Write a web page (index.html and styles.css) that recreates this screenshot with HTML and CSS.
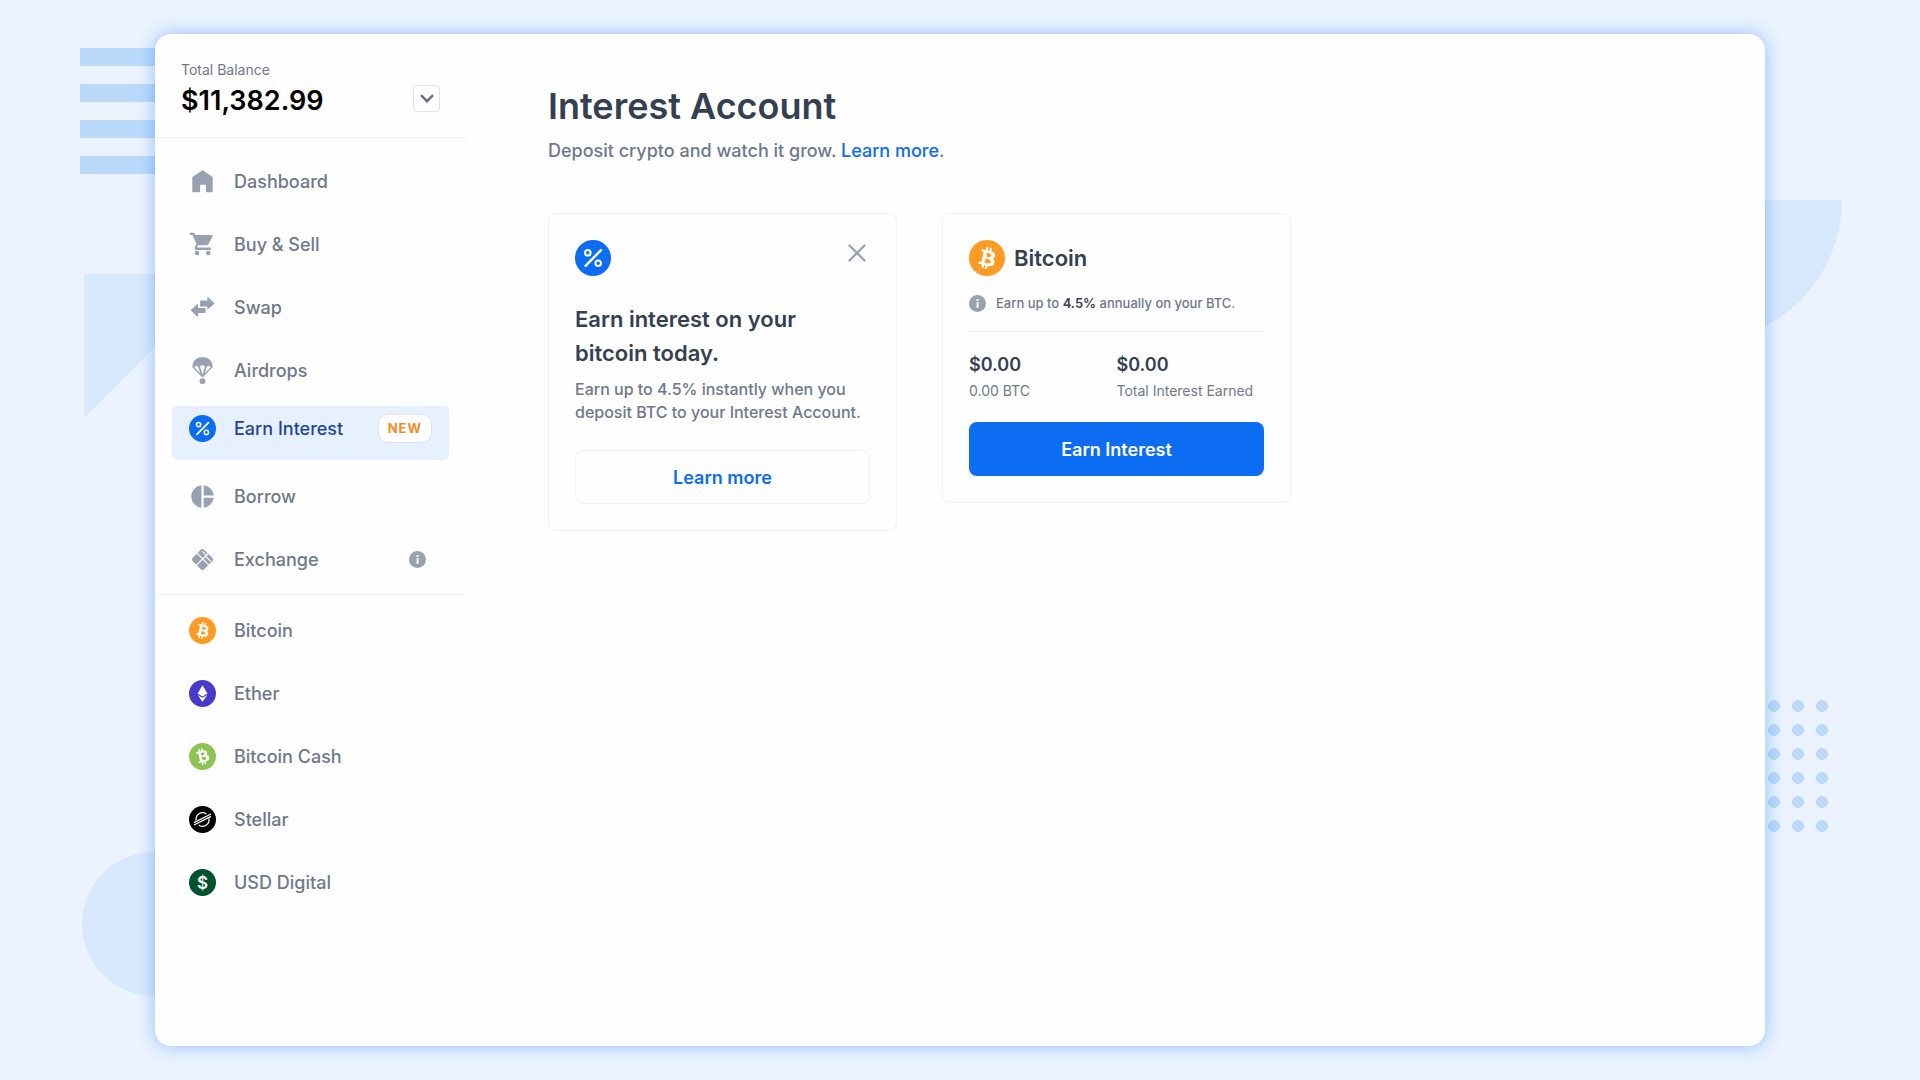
FILE: index.html
```html
<!DOCTYPE html>
<html lang="en">
<head>
  <meta charset="UTF-8" />
  <meta name="viewport" content="width=device-width, initial-scale=1.0" />
  <title>Interest Account</title>
  <link rel="stylesheet" href="styles.css">
</head>
<body>
  <!-- shared icons -->
  <svg class="sprite" aria-hidden="true">
    <symbol id="percent" viewBox="0 0 36 36">
      <circle cx="18" cy="18" r="18" fill="#0c6cf2" />
      <g fill="none" stroke="#fff" stroke-width="2">
        <circle cx="12.8" cy="12.8" r="2.8" />
        <circle cx="23.2" cy="23.2" r="2.8" />
        <path d="M10.5 25.8 26 10.2" stroke-width="2.4" stroke-linecap="round" />
      </g>
    </symbol>
    <symbol id="coin-b" viewBox="0 0 32 32">
      <path fill="#fff" fill-rule="evenodd" d="M23.189 14.02c.314-2.096-1.283-3.223-3.465-3.975l.708-2.84-1.728-.43-.69 2.765c-.454-.114-.92-.22-1.385-.326l.695-2.783L15.596 6l-.708 2.839c-.376-.086-.746-.17-1.104-.26l.002-.009-2.384-.595-.46 1.846s1.283.294 1.256.312c.7.175.826.638.805 1.006l-.806 3.235c.048.012.11.03.18.057l-.183-.045-1.13 4.532c-.086.212-.303.531-.793.41.018.025-1.256-.313-1.256-.313l-.858 1.978 2.25.561c.418.105.828.215 1.231.318l-.715 2.872 1.727.43.708-2.84c.472.127.93.245 1.378.357l-.706 2.828 1.728.43.715-2.866c2.948.558 5.164.333 6.097-2.333.752-2.146-.037-3.385-1.588-4.192 1.13-.26 1.98-1.003 2.207-2.538zm-3.95 5.538c-.533 2.147-4.148.986-5.32.695l.95-3.805c1.172.293 4.929.872 4.37 3.11zm.535-5.569c-.487 1.953-3.495.96-4.47.717l.86-3.45c.975.243 4.118.696 3.61 2.733z" />
    </symbol>
    <symbol id="bitcoin" viewBox="0 0 32 32">
      <circle cx="16" cy="16" r="16" fill="#ff9b22" />
      <use href="#coin-b" width="32" height="32" />
    </symbol>
    <symbol id="info" viewBox="0 0 17 17">
      <circle cx="8.5" cy="8.5" r="8.5" fill="#98a1b2" />
      <path fill="#fff" d="M7.6 4h1.9v1.9H7.6zM7.6 7.2h1.9V13H7.6z" />
    </symbol>
  </svg>

  <div class="stage">
    <div class="decor stripes"></div>
    <div class="decor wedge"></div>
    <div class="decor circle"></div>
    <div class="decor quarter"></div>
    <div class="decor dots"></div>

    <div class="window">
      <aside class="sidebar">
        <div class="balance">
          <div>
            <p class="balance-label">Total Balance</p>
            <p class="balance-amount">$11,382.99</p>
          </div>
          <button class="toggle-btn" aria-label="Show balances">
            <svg width="14" height="9" viewBox="0 0 14 9"><path d="M1 1.2 7 7.2l6-6" fill="none" stroke="#677184" stroke-width="2.4" /></svg>
          </button>
        </div>

        <nav class="nav">
          <a class="nav-item" href="#">
            <svg class="icon" viewBox="0 0 27 27"><path fill="#98a1b2" d="M13.5 2.2 23 8.6q.7.6.7 1.4V23q0 1.200-1.200 1.200h-4.600q-1 0-1-1v-5.400q0-1-1-1h-3.800q-1 0-1 1v5.400q0 1-1 1H4.500q-1.200 0-1.200-1.200V10q0-.8.7-1.400z" /></svg>
            <span>Dashboard</span>
          </a>
          <a class="nav-item" href="#">
            <svg class="icon" viewBox="0 0 27 27">
              <path fill="#98a1b2" d="M1 1.800h4.200l1.100 2.300h16.200q1.500.2.9 1.600l-4.100 7.500q-.6 1.100-1.900 1.100H9l-1 1.900q-.1.400.4.400h13.300v2.300H7.800q-2.900-.2-2-2.900l1.700-3-4.100-8.900H1z" />
              <circle cx="8" cy="22" r="2.300" fill="#98a1b2" /><circle cx="19.300" cy="22" r="2.300" fill="#98a1b2" />
            </svg>
            <span>Buy &amp; Sell</span>
          </a>
          <a class="nav-item" href="#">
            <svg class="icon" viewBox="0 0 27 27">
              <path fill="#98a1b2" d="M18.300 3.500q.2-.8.9-.2l5.900 5.600q.5.500 0 1l-5.900 5.200q-.7.500-.9-.3v-2.400h-7.200V6.500h7.200z" />
              <path fill="#98a1b2" d="M9 22.200q-.2.700-.9.200l-6-5.600q-.5-.6 0-1.100l6-5.500q.7-.6.900.2v3.500h7.600v5.100H9z" />
            </svg>
            <span>Swap</span>
          </a>
          <a class="nav-item" href="#">
            <svg class="icon" viewBox="0 0 27 27">
              <path fill="#98a1b2" d="M3.300 10.200Q3.700.2 13.500 0q9.800.2 10.200 10.200L13.500 20.600z" />
              <path fill="#fff" d="M5.300 10.300q1.700-2.800 3.700-.8l2.400 7zM11 9.600q2.500-2.600 5 0l-2.500 8zM18 9.500q2-2 3.700.8l-6.100 6.200z" />
              <circle cx="13.500" cy="24.200" r="2.900" fill="#98a1b2" />
            </svg>
            <span>Airdrops</span>
          </a>
          <a class="nav-item active" href="#">
            <svg class="icon"><use href="#percent" /></svg>
            <span>Earn Interest</span>
            <span class="badge">NEW</span>
          </a>
          <a class="nav-item" href="#">
            <svg class="icon" viewBox="0 0 27 27"><path fill="#98a1b2" d="M12.400 2.300v22.400a11.250 11.250 0 0 1 0-22.400zM14.700 2.300a11.250 11.250 0 0 1 10 10.100h-10zM14.700 14.700h10a11.250 11.250 0 0 1-10 10z" /></svg>
            <span>Borrow</span>
          </a>
          <a class="nav-item" href="#">
            <svg class="icon" viewBox="0 0 27 27">
              <rect x="5.400" y="5.400" width="16.200" height="16.200" rx="2" fill="#98a1b2" transform="rotate(45 13.500 13.500)" />
              <path fill="none" stroke="#fff" stroke-width="1.100" d="M7.300 6.500l12.900 12.900M20.200 6.500 7 19.700M16.500 10.200l5.200 5.200M13.300 5.400l3.500 3.500" />
            </svg>
            <span>Exchange</span>
            <svg class="info-icon"><use href="#info" /></svg>
          </a>
        </nav>

        <nav class="nav coins">
          <a class="nav-item" href="#">
            <svg class="icon"><use href="#bitcoin" /></svg>
            <span>Bitcoin</span>
          </a>
          <a class="nav-item" href="#">
            <svg class="icon" viewBox="0 0 27 27">
              <circle cx="13.500" cy="13.500" r="13.500" fill="#473bcb" />
              <path fill="#fff" d="M13.500 5.200 18.400 13.600l-4.900 2.800-4.900-2.800z" />
              <path fill="#fff" d="M8.600 15l4.900 2.800 4.900-2.800-4.900 6.800z" />
            </svg>
            <span>Ether</span>
          </a>
          <a class="nav-item" href="#">
            <svg class="icon" viewBox="0 0 32 32">
              <circle cx="16" cy="16" r="16" fill="#8dc351" />
              <use href="#coin-b" width="32" height="32" transform="rotate(-28 16 16)" />
            </svg>
            <span>Bitcoin Cash</span>
          </a>
          <a class="nav-item" href="#">
            <svg class="icon" viewBox="0 0 27 27">
              <circle cx="13.500" cy="13.500" r="13.500" fill="#000" />
              <g fill="none" stroke="#fff" stroke-width="1.200">
                <path d="M7.100 14.600A6.600 6.600 0 0 1 17.400 8M19.900 12.300A6.600 6.600 0 0 1 9.600 19" />
                <path d="M5 16.600 22 8M5 19 22 10.400" />
              </g>
            </svg>
            <span>Stellar</span>
          </a>
          <a class="nav-item" href="#">
            <svg class="icon" viewBox="0 0 27 27">
              <circle cx="13.500" cy="13.500" r="13.500" fill="#00522c" />
              <text class="dollar" x="13.500" y="19.500" text-anchor="middle">$</text>
            </svg>
            <span>USD Digital</span>
          </a>
        </nav>
      </aside>

      <main class="content">
        <h1>Interest Account</h1>
        <p class="subtitle">Deposit crypto and watch it grow. <a href="#">Learn more</a>.</p>

        <div class="cards">
          <section class="card">
            <div class="card-top">
              <svg class="big-icon"><use href="#percent" /></svg>
              <button class="close-btn" aria-label="Close">
                <svg width="18" height="18" viewBox="0 0 18 18"><path d="M1.500 1.500l15 15M16.500 1.500l-15 15" stroke="#98a1b2" stroke-width="2.300" stroke-linecap="round" /></svg>
              </button>
            </div>
            <h2 class="promo-title">Earn interest on your bitcoin today.</h2>
            <p class="promo-text">Earn up to 4.5% instantly when you deposit BTC to your Interest Account.</p>
            <button class="btn btn-outline">Learn more</button>
          </section>

          <section class="card">
            <div class="coin-head">
              <svg class="big-icon"><use href="#bitcoin" /></svg>
              <h2>Bitcoin</h2>
            </div>
            <p class="rate">
              <svg class="info-icon"><use href="#info" /></svg>
              <span>Earn up to <b>4.5%</b> annually on your BTC.</span>
            </p>
            <div class="stats">
              <div>
                <p class="stat-value">$0.00</p>
                <p class="stat-label">0.00 BTC</p>
              </div>
              <div>
                <p class="stat-value">$0.00</p>
                <p class="stat-label">Total Interest Earned</p>
              </div>
            </div>
            <button class="btn btn-primary">Earn Interest</button>
          </section>
        </div>
      </main>
    </div>
  </div>
</body>
</html>
```
FILE: styles.css
```css
* {
  box-sizing: border-box;
  margin: 0;
  padding: 0;
}
body {
  font-family: Inter, "Liberation Sans", sans-serif;
  font-weight: 500;
  color: #6e788b;
  background: #eaf3fe;
}
a {
  color: #0c6cf2;
  text-decoration: none;
}
button {
  font-family: inherit;
  cursor: pointer;
}
svg {
  flex-shrink: 0;
}
.sprite {
  position: absolute;
  width: 0;
  height: 0;
}
.stage {
  position: relative;
  display: flex;
  min-height: 100vh;
  padding: 34px 155px;
  overflow: hidden;
}

/* background shapes, partly hidden behind the window */
.decor {
  position: absolute;
}
.stripes {
  left: 80px;
  top: 48px;
  width: 120px;
  height: 126px;
  background: repeating-linear-gradient(#bbdafb 0 18px, transparent 18px 36px);
}
.wedge {
  left: 84px;
  top: 274px;
  width: 144px;
  height: 144px;
  background: #d8e8fd;
  clip-path: polygon(0 0, 100% 0, 0 100%);
}
.circle {
  left: 82px;
  bottom: 84px;
  width: 144px;
  height: 144px;
  border-radius: 50%;
  background: #d8e8fd;
}
.quarter {
  right: 78px;
  top: 200px;
  width: 142px;
  height: 142px;
  border-radius: 0 0 100% 0;
  background: #d8e8fc;
}
.dots {
  right: 86px;
  top: 694px;
  width: 72px;
  height: 144px;
  background: radial-gradient(circle, #bbdafb 6px, transparent 6px) 0 0 / 24px 24px;
}

.window {
  position: relative;
  display: flex;
  flex: 1;
  background: #fefefe;
  border-radius: 16px;
  box-shadow: 0 0 18px rgba(12, 108, 242, 0.4);
}

/* sidebar */
.sidebar {
  width: 312px;
  flex-shrink: 0;
}
.balance {
  display: flex;
  justify-content: space-between;
  align-items: flex-end;
  height: 104px;
  padding: 0 27px 18px 26px;
  border-bottom: 1px solid #f0f2f7;
}
.balance-label {
  font-size: 14px;
  line-height: 20px;
  font-weight: 400;
}
.balance-amount {
  margin-top: 3px;
  font-size: 27px;
  line-height: 36px;
  font-weight: 600;
  color: #000;
}
.toggle-btn {
  display: flex;
  align-items: center;
  justify-content: center;
  width: 27px;
  height: 27px;
  margin-bottom: 7px;
  background: #fff;
  border: 1px solid #dfe3eb;
  border-radius: 4px;
}
.nav {
  display: flex;
  flex-direction: column;
  gap: 9px;
  padding: 16px 18px 8px 17px;
}
.coins {
  padding-top: 8px;
  border-top: 1px solid #f0f2f7;
}
.nav-item {
  display: flex;
  align-items: center;
  gap: 18px;
  height: 54px;
  padding: 0 17px;
  border-radius: 5px;
  font-size: 18px;
  color: #6e788b;
}
.nav-item.active {
  padding-bottom: 10px;
  background: #e6f0fe;
  color: #1d4699;
}
.icon {
  width: 27px;
  height: 27px;
}
.dollar {
  font-size: 17px;
  font-weight: 600;
  fill: #fff;
}
.badge {
  margin-left: auto;
  padding: 0 9px;
  background: #fff;
  border: 1px solid #dfe3eb;
  border-radius: 10px;
  font-size: 13px;
  line-height: 27px;
  font-weight: 700;
  letter-spacing: 1px;
  color: #f68a1f;
}
.info-icon {
  width: 17px;
  height: 17px;
}
.nav-item .info-icon {
  margin: 0 6px 0 auto;
}

/* page */
.content {
  flex: 1;
  padding: 48px 81px;
}
h1 {
  font-size: 36px;
  line-height: 48px;
  font-weight: 600;
  color: #353f52;
}
.subtitle {
  margin-top: 8px;
  font-size: 18px;
  line-height: 26px;
}
.cards {
  display: flex;
  flex-wrap: wrap;
  align-items: flex-start;
  gap: 45px;
  margin-top: 49px;
}
.card {
  width: 349px;
  padding: 26px;
  border: 1px solid #f0f2f7;
  border-radius: 8px;
}
.card h2 {
  font-size: 22px;
  line-height: 34px;
  font-weight: 600;
  color: #353f52;
}
.card-top {
  display: flex;
  justify-content: space-between;
  align-items: flex-start;
}
.big-icon {
  width: 36px;
  height: 36px;
}
.close-btn {
  display: flex;
  padding: 4px;
  background: none;
  border: none;
}
.card .promo-title {
  margin-top: 26px;
}
.promo-text {
  margin-top: 8px;
  font-size: 16px;
  line-height: 23px;
}
.btn {
  width: 100%;
  height: 54px;
  border-radius: 8px;
  font-size: 18px;
  font-weight: 600;
}
.btn-outline {
  margin-top: 26px;
  background: none;
  border: 1px solid #f0f2f7;
  color: #0c6cf2;
}
.btn-primary {
  margin-top: 20px;
  background: #0c6cf2;
  border: none;
  color: #fff;
}
.coin-head {
  display: flex;
  align-items: center;
  gap: 9px;
}
.rate {
  display: flex;
  align-items: center;
  gap: 10px;
  margin-top: 17px;
  padding-bottom: 18px;
  border-bottom: 1px solid #f0f2f7;
  font-size: 13px;
  line-height: 20px;
}
.rate b {
  font-weight: 600;
  color: #353f52;
}
.stats {
  display: grid;
  grid-template-columns: 1fr 1fr;
  margin-top: 20px;
}
.stat-value {
  font-size: 18px;
  line-height: 26px;
  font-weight: 600;
  color: #353f52;
}
.stat-label {
  margin-top: 2px;
  font-size: 14px;
  line-height: 22px;
  font-weight: 400;
}
```
